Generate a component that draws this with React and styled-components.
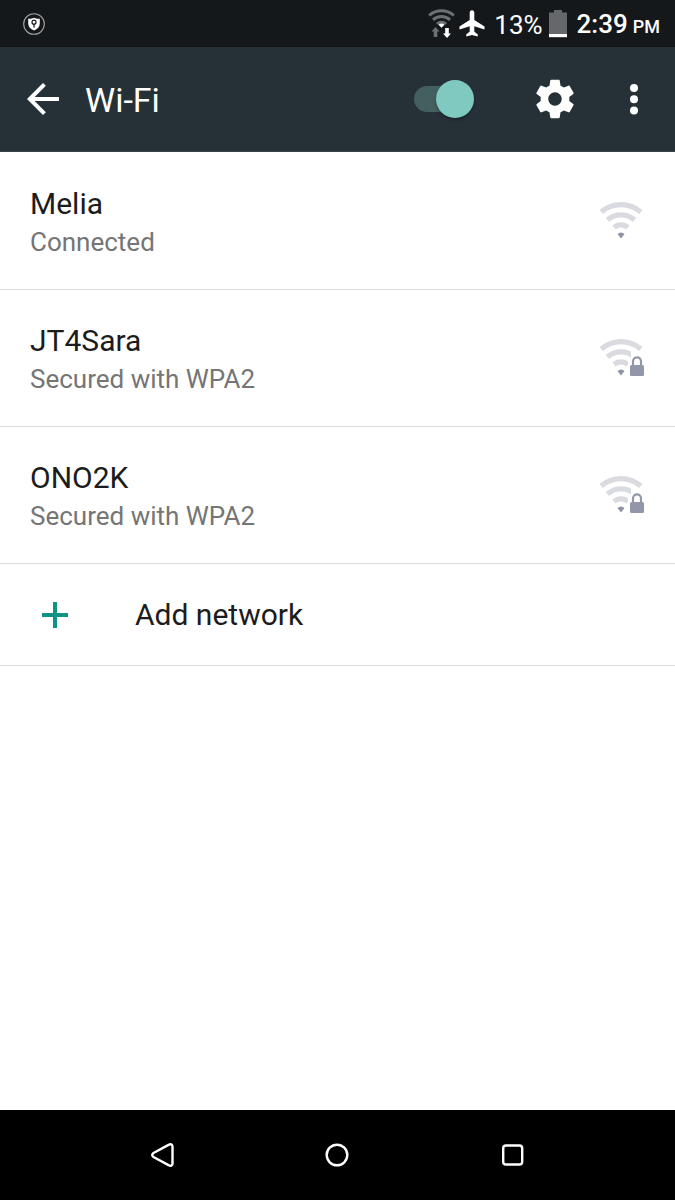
import React from 'react';
import styled, { createGlobalStyle } from 'styled-components';

const GlobalStyle = createGlobalStyle`
  * { box-sizing: border-box; }
  body {
    margin: 0;
    background: #fff;
    font-family: Roboto, "Noto Sans", sans-serif;
  }
  svg { display: block; flex: none; }
`;

const Screen = styled.div`
  display: flex;
  flex-direction: column;
  min-height: 100vh;
`;

const StatusBar = styled.div`
  display: flex;
  align-items: center;
  justify-content: space-between;
  height: 47px;
  padding: 0 15px 0 22px;
  background: #14181b;
  color: #fff;
`;

const StatusGroup = styled.div`
  display: flex;
  align-items: center;
`;

const SignalIcons = styled.div`
  display: flex;
  align-items: center;
  gap: 3px;
`;

const BatteryLevel = styled.span`
  margin: 3px 6px 0 9px;
  font-size: 26px;
  line-height: 30px;
`;

const Clock = styled.time`
  margin: 4px 0 0 10px;
  font-size: 26px;
  font-weight: 500;
  line-height: 30px;
  white-space: nowrap;
`;

const Meridiem = styled.span`
  margin-left: 5px;
  font-size: 18px;
`;

const AppBar = styled.header`
  display: flex;
  align-items: center;
  height: 105px;
  padding: 0 17px 0 19px;
  background: #263137;
  border-bottom: 1px solid #3a454a;
  color: #fff;
`;

const IconButton = styled.button`
  display: grid;
  place-items: center;
  width: 48px;
  height: 48px;
  padding: 0;
  border: 0;
  background: none;
  color: inherit;
`;

const Title = styled.h1`
  flex: 1;
  margin: 2px 0 0 18px;
  font-size: 34px;
  font-weight: 400;
  line-height: 40px;
`;

const Switch = styled.input`
  appearance: none;
  display: flex;
  align-items: center;
  width: 60px;
  height: 38px;
  margin: 0 57px 0 0;

  &::before {
    content: "";
    width: 56px;
    height: 26px;
    border-radius: 13px;
    background: #43605f;
  }

  &::after {
    content: "";
    flex: none;
    width: 38px;
    height: 38px;
    margin-left: -34px;
    border-radius: 50%;
    background: #80c9c1;
    box-shadow: 0 2px 3px rgba(0, 0, 0, 0.3);
  }
`;

const BarActions = styled.div`
  display: flex;
  gap: 31px;
`;

const Content = styled.main`
  flex: 1;
  background: #fff;
`;

const NetworkList = styled.ul`
  margin: 0;
  padding: 1px 0 0;
  list-style: none;
`;

const Item = styled.li`
  border-bottom: 1px solid #dcdcdc;
`;

const RowButton = styled.button`
  display: flex;
  align-items: center;
  width: 100%;
  min-height: ${({ $compact }) => ($compact ? '101px' : '136px')};
  padding: 0 30px;
  border: 0;
  background: none;
  color: #1c1c1c;
  font: inherit;
  text-align: left;
`;

const NetworkText = styled.span`
  display: flex;
  flex: 1;
  flex-direction: column;
  padding-top: 3px;
`;

const Name = styled.span`
  font-size: 30px;
  line-height: 38px;
`;

const Detail = styled.span`
  color: #757575;
  font-size: 26px;
  line-height: 38px;
`;

const AddIcon = styled.span`
  width: 105px;
  padding-left: 12px;
`;

const NavBar = styled.nav`
  display: grid;
  grid-template-columns: repeat(3, 1fr);
  justify-items: center;
  align-items: center;
  height: 90px;
  padding: 0 calc(100% / 9);
  background: #000;
  color: #fff;
`;

const ShieldIcon = () => (
  <svg width="24" height="24" viewBox="0 0 24 24" aria-hidden="true">
    <circle cx="12" cy="12" r="10.3" fill="none" stroke="#a5a7a8" strokeWidth="1.1" />
    <path d="M12 5.8c1.8 1 3.8 1.1 5.8 1v4.600c0 3.300-2.300 5.600-5.800 7.100-3.500-1.500-5.800-3.800-5.800-7.100V6.800c2 .1 4 0 5.800-1z" fill="#fff" />
    <circle cx="12" cy="10.200" r="2" fill="none" stroke="#14181b" strokeWidth="1.200" />
    <path d="M12 12.200v3.400" stroke="#14181b" strokeWidth="1.300" />
  </svg>
);

const StatusWifiIcon = () => (
  <svg width="28" height="30" viewBox="0 0 28 30" aria-hidden="true">
    <g fill="none" stroke="#6d7072" strokeWidth="3">
      <path d="M1.200 6.500a18.500 18.500 0 0 1 24.600 0" />
      <path d="M5 10.800a12.500 12.500 0 0 1 17 0" />
      <path d="M9 15a6.500 6.500 0 0 1 9 0" />
    </g>
    <path d="M10.500 15.700q3-2.200 6 0l-3 3z" fill="#fff" />
    <path d="M7.500 18l4 4.500H9.300V28H5.700v-5.500H3.500z" fill="#6d7072" />
    <path d="M19 29l-4-4.500h2.200V19h3.600v5.500H23z" fill="#fff" />
  </svg>
);

const AirplaneIcon = () => (
  <svg width="26" height="27" viewBox="0 0 26 27" aria-hidden="true">
    <path fill="#fff" d="M13 .2c1.500 0 2.300 1.200 2.300 2.700v7l10.200 6.500v3L15.300 16.200v5.500l3.400 2.500v2.300L13 25.100l-5.700 1.400v-2.300l3.400-2.500v-5.500L.5 19.400v-3L10.700 9.900v-7C10.700 1.400 11.500.2 13 .2z" />
  </svg>
);

const BatteryIcon = () => (
  <svg width="18" height="28" viewBox="0 0 18 28" aria-hidden="true">
    <path d="M5 0h8v2.500h5V24H0V2.500h5z" fill="#65686a" />
    <path d="M0 24h18v3.200H0z" fill="#fff" />
  </svg>
);

const BackIcon = () => (
  <svg width="48" height="48" viewBox="0 0 24 24" fill="currentColor" aria-hidden="true">
    <path d="M20 11H7.830l5.590-5.590L12 4l-8 8 8 8 1.410-1.410L7.830 13H20v-2z" />
  </svg>
);

const GearIcon = () => (
  <svg width="46" height="46" viewBox="0 0 24 24" fill="currentColor" aria-hidden="true">
    <path d="M19.430 12.980c.04-.32.070-.64.070-.98s-.03-.66-.07-.98l2.110-1.650c.19-.15.240-.42.120-.64l-2-3.460c-.12-.22-.39-.3-.61-.22l-2.490 1c-.52-.4-1.080-.73-1.690-.98l-.38-2.650C14.460 2.180 14.250 2 14 2h-4c-.25 0-.46.180-.49.420l-.38 2.650c-.61.250-1.170.590-1.690.980l-2.490-1c-.23-.09-.49 0-.61.220l-2 3.460c-.13.220-.07.490.120.640l2.110 1.650c-.04.320-.07.650-.07.980s.03.660.070.980l-2.110 1.650c-.19.150-.24.420-.12.640l2 3.460c.12.220.39.300.61.220l2.490-1c.52.400 1.080.730 1.690.980l.38 2.650c.03.240.24.420.49.420h4c.25 0 .46-.18.490-.42l.38-2.650c.61-.25 1.170-.59 1.690-.98l2.490 1c.23.090.49 0 .61-.22l2-3.460c.12-.22.07-.49-.12-.64l-2.110-1.650zM12 15.500c-1.930 0-3.500-1.570-3.500-3.500s1.570-3.500 3.500-3.500 3.500 1.570 3.500 3.500-1.570 3.500-3.500 3.500z" />
  </svg>
);

const MoreIcon = () => (
  <svg width="8" height="32" viewBox="0 0 8 32" fill="currentColor" aria-hidden="true">
    <circle cx="4" cy="5" r="4" />
    <circle cx="4" cy="16.300" r="4" />
    <circle cx="4" cy="27.600" r="4" />
  </svg>
);

const WifiIcon = ({ secured }) => (
  <svg width="45" height="38" viewBox="0 1 45 38" aria-hidden="true">
    <clipPath id="lock-cutout">
      <path d="M0 0h45v13H31v7h-3v19H0z" />
    </clipPath>
    <g fill="none" stroke="#dadbe1" strokeWidth="5.200" clipPath={secured ? 'url(#lock-cutout)' : undefined}>
      <path d="M1.200 11a30.500 30.500 0 0 1 39.600 0" />
      <path d="M7.500 19a20.500 20.500 0 0 1 27 0" />
      <path d="M14 26.500a10.500 10.500 0 0 1 14 0" />
    </g>
    <path d="M17.500 33q3.500-3 7 0l-3.500 4.500z" fill="#8f93a3" />
    {secured && (
      <>
        <rect x="30" y="27" width="14" height="11" rx="1.500" fill="#9197a8" />
        <path d="M33 28v-4.700a4 4 0 0 1 8 0V28" fill="none" stroke="#9197a8" strokeWidth="2.200" />
      </>
    )}
  </svg>
);

const PlusIcon = () => (
  <svg width="26" height="26" viewBox="0 0 26 26" aria-hidden="true">
    <path d="M13 0v26M0 13h26" stroke="#0e9484" strokeWidth="4" />
  </svg>
);

const NavIcon = ({ children }) => (
  <svg width="26" height="26" viewBox="0 0 26 26" fill="none" stroke="currentColor" strokeWidth="2.400" strokeLinejoin="round" aria-hidden="true">
    {children}
  </svg>
);

const networks = [
  { name: 'Melia', detail: 'Connected', secured: false },
  { name: 'JT4Sara', detail: 'Secured with WPA2', secured: true },
  { name: 'ONO2K', detail: 'Secured with WPA2', secured: true },
];

export default function App() {
  return (
    <Screen>
      <GlobalStyle />
      <StatusBar>
        <ShieldIcon />
        <StatusGroup>
          <SignalIcons>
            <StatusWifiIcon />
            <AirplaneIcon />
          </SignalIcons>
          <BatteryLevel>13%</BatteryLevel>
          <BatteryIcon />
          <Clock dateTime="14:39">
            2:39<Meridiem>PM</Meridiem>
          </Clock>
        </StatusGroup>
      </StatusBar>

      <AppBar>
        <IconButton type="button" aria-label="Back">
          <BackIcon />
        </IconButton>
        <Title>Wi-Fi</Title>
        <Switch type="checkbox" role="switch" aria-label="Wi-Fi" defaultChecked />
        <BarActions>
          <IconButton type="button" aria-label="Settings">
            <GearIcon />
          </IconButton>
          <IconButton type="button" aria-label="More options">
            <MoreIcon />
          </IconButton>
        </BarActions>
      </AppBar>

      <Content>
        <NetworkList>
          {networks.map((network) => (
            <Item key={network.name}>
              <RowButton type="button">
                <NetworkText>
                  <Name>{network.name}</Name>
                  <Detail>{network.detail}</Detail>
                </NetworkText>
                <WifiIcon secured={network.secured} />
              </RowButton>
            </Item>
          ))}
          <Item>
            <RowButton type="button" $compact>
              <AddIcon>
                <PlusIcon />
              </AddIcon>
              <Name>Add network</Name>
            </RowButton>
          </Item>
        </NetworkList>
      </Content>

      <NavBar>
        <IconButton type="button" aria-label="Navigate back">
          <NavIcon>
            <path d="M19.500 2.900q3.500-1.800 4 1.500v17.200q-.5 3.300-4 1.500L4.500 15q-2.600-2 0-4z" />
          </NavIcon>
        </IconButton>
        <IconButton type="button" aria-label="Home">
          <NavIcon>
            <circle cx="13" cy="13" r="10.300" />
          </NavIcon>
        </IconButton>
        <IconButton type="button" aria-label="Recent apps">
          <NavIcon>
            <rect x="3.200" y="3.500" width="19" height="19" rx="2.800" />
          </NavIcon>
        </IconButton>
      </NavBar>
    </Screen>
  );
}
